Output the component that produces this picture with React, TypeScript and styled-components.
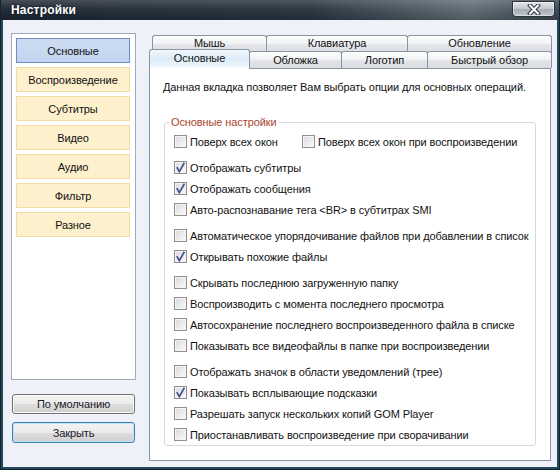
import React from 'react';
import styled, { createGlobalStyle } from 'styled-components';

const GlobalStyle = createGlobalStyle`
  html, body {
    margin: 0;
    padding: 0;
  }
  body {
    font-family: "Liberation Sans", Arial, sans-serif;
    font-size: 11px;
    letter-spacing: -0.1px;
    color: #111;
  }
`;

const Window = styled.div`
  width: 560px;
  height: 470px;
  box-sizing: border-box;
  display: flex;
  flex-direction: column;
  border: 1px solid #0f2430;
  border-top: none;
  background: #23495a;
`;

const TitleBar = styled.div`
  height: 20px;
  flex: none;
  display: flex;
  align-items: flex-start;
  padding: 0 4px 0 10px;
  background:
    linear-gradient(180deg, rgba(255, 255, 255, 0.18) 0%, rgba(255, 255, 255, 0.04) 45%, rgba(0, 0, 0, 0.15) 100%),
    linear-gradient(90deg, #1c2632 0%, #27323e 55%, #5f6a74 84%, #3a4450 100%);
`;

const Title = styled.span`
  color: #fff;
  font-weight: bold;
  font-size: 12px;
  line-height: 20px;
  letter-spacing: 0.2px;
  text-shadow: 0 0 3px rgba(0, 0, 0, 0.6);
`;

const CloseButton = styled.div`
  margin-left: auto;
  margin-top: 1px;
  width: 43px;
  height: 16px;
  box-sizing: border-box;
  border: 1px solid #2a333c;
  border-radius: 0 0 4px 4px;
  background: linear-gradient(180deg, #e3e6ea 0%, #c3c8ce 48%, #a6adb5 52%, #c0c6cd 100%);
  box-shadow: inset 0 0 0 1px rgba(255, 255, 255, 0.45);
  display: flex;
  align-items: center;
  justify-content: center;
`;

const Body = styled.div`
  flex: 1;
  display: flex;
  gap: 13px;
  padding: 13px 4px 6px 8px;
  margin: 0 2px 2px 2px;
  background: #eff1f8;
`;

const LeftColumn = styled.div`
  width: 125px;
  flex: none;
  display: flex;
  flex-direction: column;
`;

const CategoryList = styled.div`
  height: 347px;
  box-sizing: border-box;
  border: 1px solid #9eabb9;
  background: #fff;
  padding: 4px 5px 4px 4px;
  display: flex;
  flex-direction: column;
  gap: 4px;
`;

const CategoryItem = styled.div<{ $active?: boolean }>`
  height: 25px;
  box-sizing: border-box;
  display: flex;
  align-items: center;
  justify-content: center;
  border: 1px solid ${(p) => (p.$active ? '#6f8fc4' : '#f1dba6')};
  background: ${(p) => (p.$active ? 'linear-gradient(180deg, #cddcf2, #c2d4ee)' : '#fdf0cc')};
`;

const PushButton = styled.div<{ $default?: boolean }>`
  width: 123px;
  height: ${(p) => (p.$default ? 21 : 20)}px;
  margin: ${(p) => (p.$default ? '8px 0 0 1px' : '14px 0 0 1px')};
  box-sizing: border-box;
  display: flex;
  align-items: center;
  justify-content: center;
  border: 1px solid ${(p) => (p.$default ? '#3c7fb1' : '#707070')};
  border-radius: 3px;
  color: #1a1a2a;
  background: linear-gradient(180deg, #f3f3f3 0%, #ebebeb 50%, #dddddd 51%, #cfcfcf 100%);
  box-shadow: ${(p) => (p.$default ? 'inset 0 0 0 1px #bfe3f8' : 'inset 0 0 0 1px #fcfcfc')};
`;

const RightColumn = styled.div`
  width: 402px;
  flex: none;
  display: flex;
  flex-direction: column;
  padding-top: 2px;
`;

const TabStrip = styled.div`
  height: 33px;
  display: flex;
  flex-direction: column;
`;

const TabRow = styled.div<{ $front?: boolean; $indent: number }>`
  height: ${(p) => (p.$front ? 17 : 18)}px;
  margin-top: ${(p) => (p.$front ? -2 : 0)}px;
  padding-left: ${(p) => p.$indent}px;
  display: flex;
  align-items: flex-end;
  position: relative;
  z-index: ${(p) => (p.$front ? 2 : 1)};
`;

const Tab = styled.div<{ $w: number; $active?: boolean; $back?: boolean }>`
  width: ${(p) => p.$w}px;
  height: 100%;
  ${(p) => (p.$active ? 'height: 20px; position: relative; top: 1px; z-index: 3;' : '')}
  box-sizing: border-box;
  flex: none;
  display: flex;
  align-items: ${(p) => (p.$active || p.$back ? 'flex-start' : 'center')};
  padding-top: ${(p) => (p.$active ? 2 : p.$back ? 1 : 0)}px;
  line-height: 13px;
  justify-content: center;
  border: 1px solid #8995a1;
  border-bottom: none;
  border-radius: 3px 3px 0 0;
  margin-right: -1px;
  background: ${(p) =>
    p.$active
      ? 'linear-gradient(180deg, #f4f9fd 0%, #dcebf8 45%, #e9f3fb 80%, #ffffff 100%)'
      : 'linear-gradient(180deg, #fdfdfd 0%, #f1f2f4 45%, #e2e4e8 55%, #d9dce1 100%)'};
`;

const Panel = styled.div`
  height: 393px;
  box-sizing: border-box;
  border: 1px solid #8995a1;
  background: #fff;
  padding: 11px 14px 0 13px;
  position: relative;
  z-index: 1;
`;

const Description = styled.div`
  line-height: 14px;
  white-space: nowrap;
`;

const GroupBox = styled.fieldset`
  margin: 22px 0 0 1px;
  padding: 2px 8px 0 9px;
  border: 1px solid #d3dae0;
  border-radius: 3px;
  min-width: 0;
`;

const GroupTitle = styled.legend`
  margin-left: -5px;
  padding: 0 2px;
  line-height: 13px;
  color: #a8462f;
`;

const OptionGroup = styled.div`
  display: flex;
  flex-direction: column;
  & + & {
    margin-top: 5px;
  }
`;

const OptionRow = styled.div`
  height: 21px;
  display: flex;
  align-items: center;
`;

const Option = styled.label<{ $w?: number }>`
  display: flex;
  align-items: center;
  gap: 3px;
  white-space: nowrap;
  ${(p) => (p.$w ? `width: ${p.$w}px; flex: none;` : '')}
`;

const Box = styled.span`
  width: 13px;
  height: 13px;
  box-sizing: border-box;
  flex: none;
  border: 1px solid #8f8f8f;
  background: linear-gradient(135deg, #d9d9d9 0%, #ececec 55%, #fafafa 100%);
  box-shadow: inset 0 0 0 1px #f4f4f4;
  display: flex;
  align-items: center;
  justify-content: center;
`;

const Check = () => (
  <svg width="11" height="11" viewBox="0 0 11 11">
    <path d="M1.8 5.2 L4.3 9.6 L9.4 0.8" fill="none" stroke="#42528e" strokeWidth="1.7" strokeLinejoin="miter" />
  </svg>
);

const CheckBox = ({ label, checked, w }: { label: string; checked?: boolean; w?: number }) => (
  <Option $w={w}>
    <Box>{checked && <Check />}</Box>
    <span>{label}</span>
  </Option>
);

type Opt = { label: string; checked?: boolean };

const groups: Opt[][] = [
  [
    { label: 'Отображать субтитры', checked: true },
    { label: 'Отображать сообщения', checked: true },
    { label: 'Авто-распознавание тега <BR> в субтитрах SMI' },
  ],
  [
    { label: 'Автоматическое упорядочивание файлов при добавлении в список' },
    { label: 'Открывать похожие файлы', checked: true },
  ],
  [
    { label: 'Скрывать последнюю загруженную папку' },
    { label: 'Воспроизводить с момента последнего просмотра' },
    { label: 'Автосохранение последнего воспроизведенного файла в списке' },
    { label: 'Показывать все видеофайлы в папке при воспроизведении' },
  ],
  [
    { label: 'Отображать значок в области уведомлений (трее)' },
    { label: 'Показывать всплывающие подсказки', checked: true },
    { label: 'Разрешать запуск нескольких копий GOM Player' },
    { label: 'Приостанавливать воспроизведение при сворачивании' },
  ],
];

const categories = ['Основные', 'Воспроизведение', 'Субтитры', 'Видео', 'Аудио', 'Фильтр', 'Разное'];

const backTabs = [
  { label: 'Мышь', w: 115 },
  { label: 'Клавиатура', w: 142 },
  { label: 'Обновление', w: 145 },
];

const frontTabs = [
  { label: 'Основные', w: 101, active: true },
  { label: 'Обложка', w: 93 },
  { label: 'Логотип', w: 87 },
  { label: 'Быстрый обзор', w: 125 },
];

const App = () => {
  return (
    <>
      <GlobalStyle />
      <Window>
        <TitleBar>
          <Title>Настройки</Title>
          <CloseButton>
            <svg width="14" height="11" viewBox="0 0 14 11">
              <path d="M3 1.5 L11 9.5 M11 1.5 L3 9.5" stroke="#2b333b" strokeWidth="4" strokeLinecap="square" />
              <path d="M3 1.5 L11 9.5 M11 1.5 L3 9.5" stroke="#ffffff" strokeWidth="2" strokeLinecap="square" />
            </svg>
          </CloseButton>
        </TitleBar>
        <Body>
          <LeftColumn>
            <CategoryList>
              {categories.map((c, i) => (
                <CategoryItem key={c} $active={i === 0}>
                  {c}
                </CategoryItem>
              ))}
            </CategoryList>
            <PushButton>По умолчанию</PushButton>
            <PushButton $default>Закрыть</PushButton>
          </LeftColumn>
          <RightColumn>
            <TabStrip>
              <TabRow $indent={3}>
                {backTabs.map((t) => (
                  <Tab key={t.label} $w={t.w} $back>
                    {t.label}
                  </Tab>
                ))}
              </TabRow>
              <TabRow $front $indent={0}>
                {frontTabs.map((t) => (
                  <Tab key={t.label} $w={t.w} $active={t.active}>
                    {t.label}
                  </Tab>
                ))}
              </TabRow>
            </TabStrip>
            <Panel>
              <Description>Данная вкладка позволяет Вам выбрать опции для основных операций.</Description>
              <GroupBox>
                <GroupTitle>Основные настройки</GroupTitle>
                <OptionGroup>
                  <OptionRow>
                    <CheckBox label="Поверх всех окон" w={128} />
                    <CheckBox label="Поверх всех окон при воспроизведении" />
                  </OptionRow>
                </OptionGroup>
                {groups.map((g, gi) => (
                  <OptionGroup key={gi}>
                    {g.map((o) => (
                      <OptionRow key={o.label}>
                        <CheckBox label={o.label} checked={o.checked} />
                      </OptionRow>
                    ))}
                  </OptionGroup>
                ))}
              </GroupBox>
            </Panel>
          </RightColumn>
        </Body>
      </Window>
    </>
  );
};

export default App;
